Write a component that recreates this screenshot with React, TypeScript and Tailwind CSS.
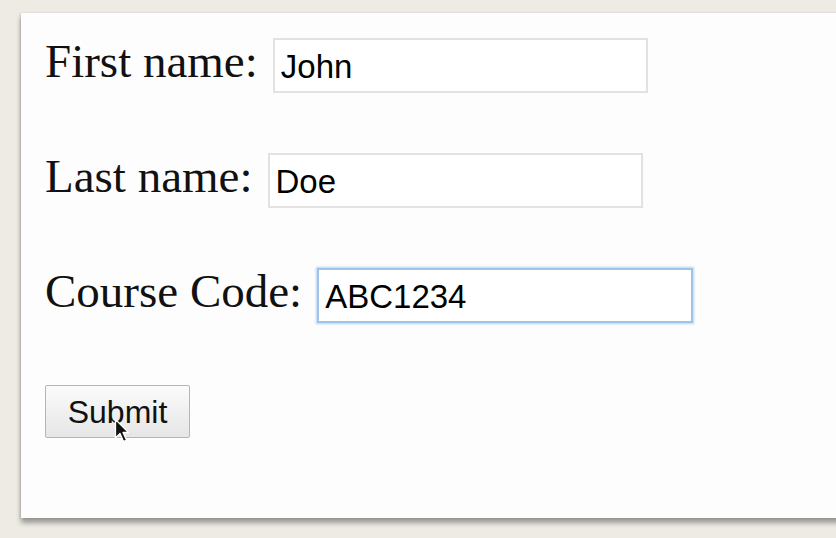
import { useState } from "react";

const serif = { fontFamily: '"Liberation Serif", "Times New Roman", serif' };

function Field({
  label,
  value,
  onChange,
  focused,
}: {
  label: string;
  value: string;
  onChange: (v: string) => void;
  focused?: boolean;
}) {
  return (
    <div className="flex items-center h-[55px]">
      <label className="text-[47px] leading-none text-[#111] pb-[8px] whitespace-nowrap font-['Liberation_Serif',serif]">
        {label}
      </label>
      <input
        value={value}
        onChange={(e) => onChange(e.target.value)}
        className={
          focused
            ? "ml-[15px] w-[376px] h-[55px] px-[6px] pt-[2px] text-[33px] text-black bg-white outline-none font-['Liberation_Sans',Arial,sans-serif] border-2 border-[#9fc4ea] shadow-[0_0_2px_1px_rgba(120,170,230,0.5)]"
            : "ml-[15px] w-[375px] h-[55px] px-[6px] pt-[2px] text-[33px] text-black bg-white outline-none font-['Liberation_Sans',Arial,sans-serif] border-2 border-[#e2e2e2]"
        }
      />
    </div>
  );
}

export default function App() {
  const [first, setFirst] = useState("John");
  const [last, setLast] = useState("Doe");
  const [code, setCode] = useState("ABC1234");

  return (
    <div className="w-[836px] h-[538px] overflow-hidden bg-[#eeebe5] pt-[13px] pl-[21px]">
      <div className="relative w-[900px] h-[505px] bg-[#fdfdfd] shadow-[0_5px_5px_rgba(0,0,0,0.35),-1px_0_2px_rgba(0,0,0,0.12)] pl-[24px] pt-[25px]" style={serif}>
        <div className="flex flex-col gap-[60px]">
          <Field label="First name:" value={first} onChange={setFirst} />
          <Field label="Last name:" value={last} onChange={setLast} />
          <Field label="Course Code:" value={code} onChange={setCode} focused />
        </div>
        <button className="mt-[62px] w-[145px] h-[53px] border border-[#b5b5b5] rounded-[2px] bg-gradient-to-b from-[#fbfbfb] to-[#e6e6e6] text-[32px] text-[#111] font-['Liberation_Sans',Arial,sans-serif]">
          Submit
        </button>
        <svg
          className="absolute left-[93px] top-[405px]"
          width="16"
          height="26"
          viewBox="0 0 16 26"
        >
          <path
            d="M1.5 1.5 L1.5 20 L6 15.5 L9.5 23.5 L12.5 22 L9 14.5 L14.5 14.5 Z"
            fill="#111"
            stroke="#fff"
            strokeWidth="1.3"
            strokeLinejoin="round"
          />
        </svg>
      </div>
    </div>
  );
}
